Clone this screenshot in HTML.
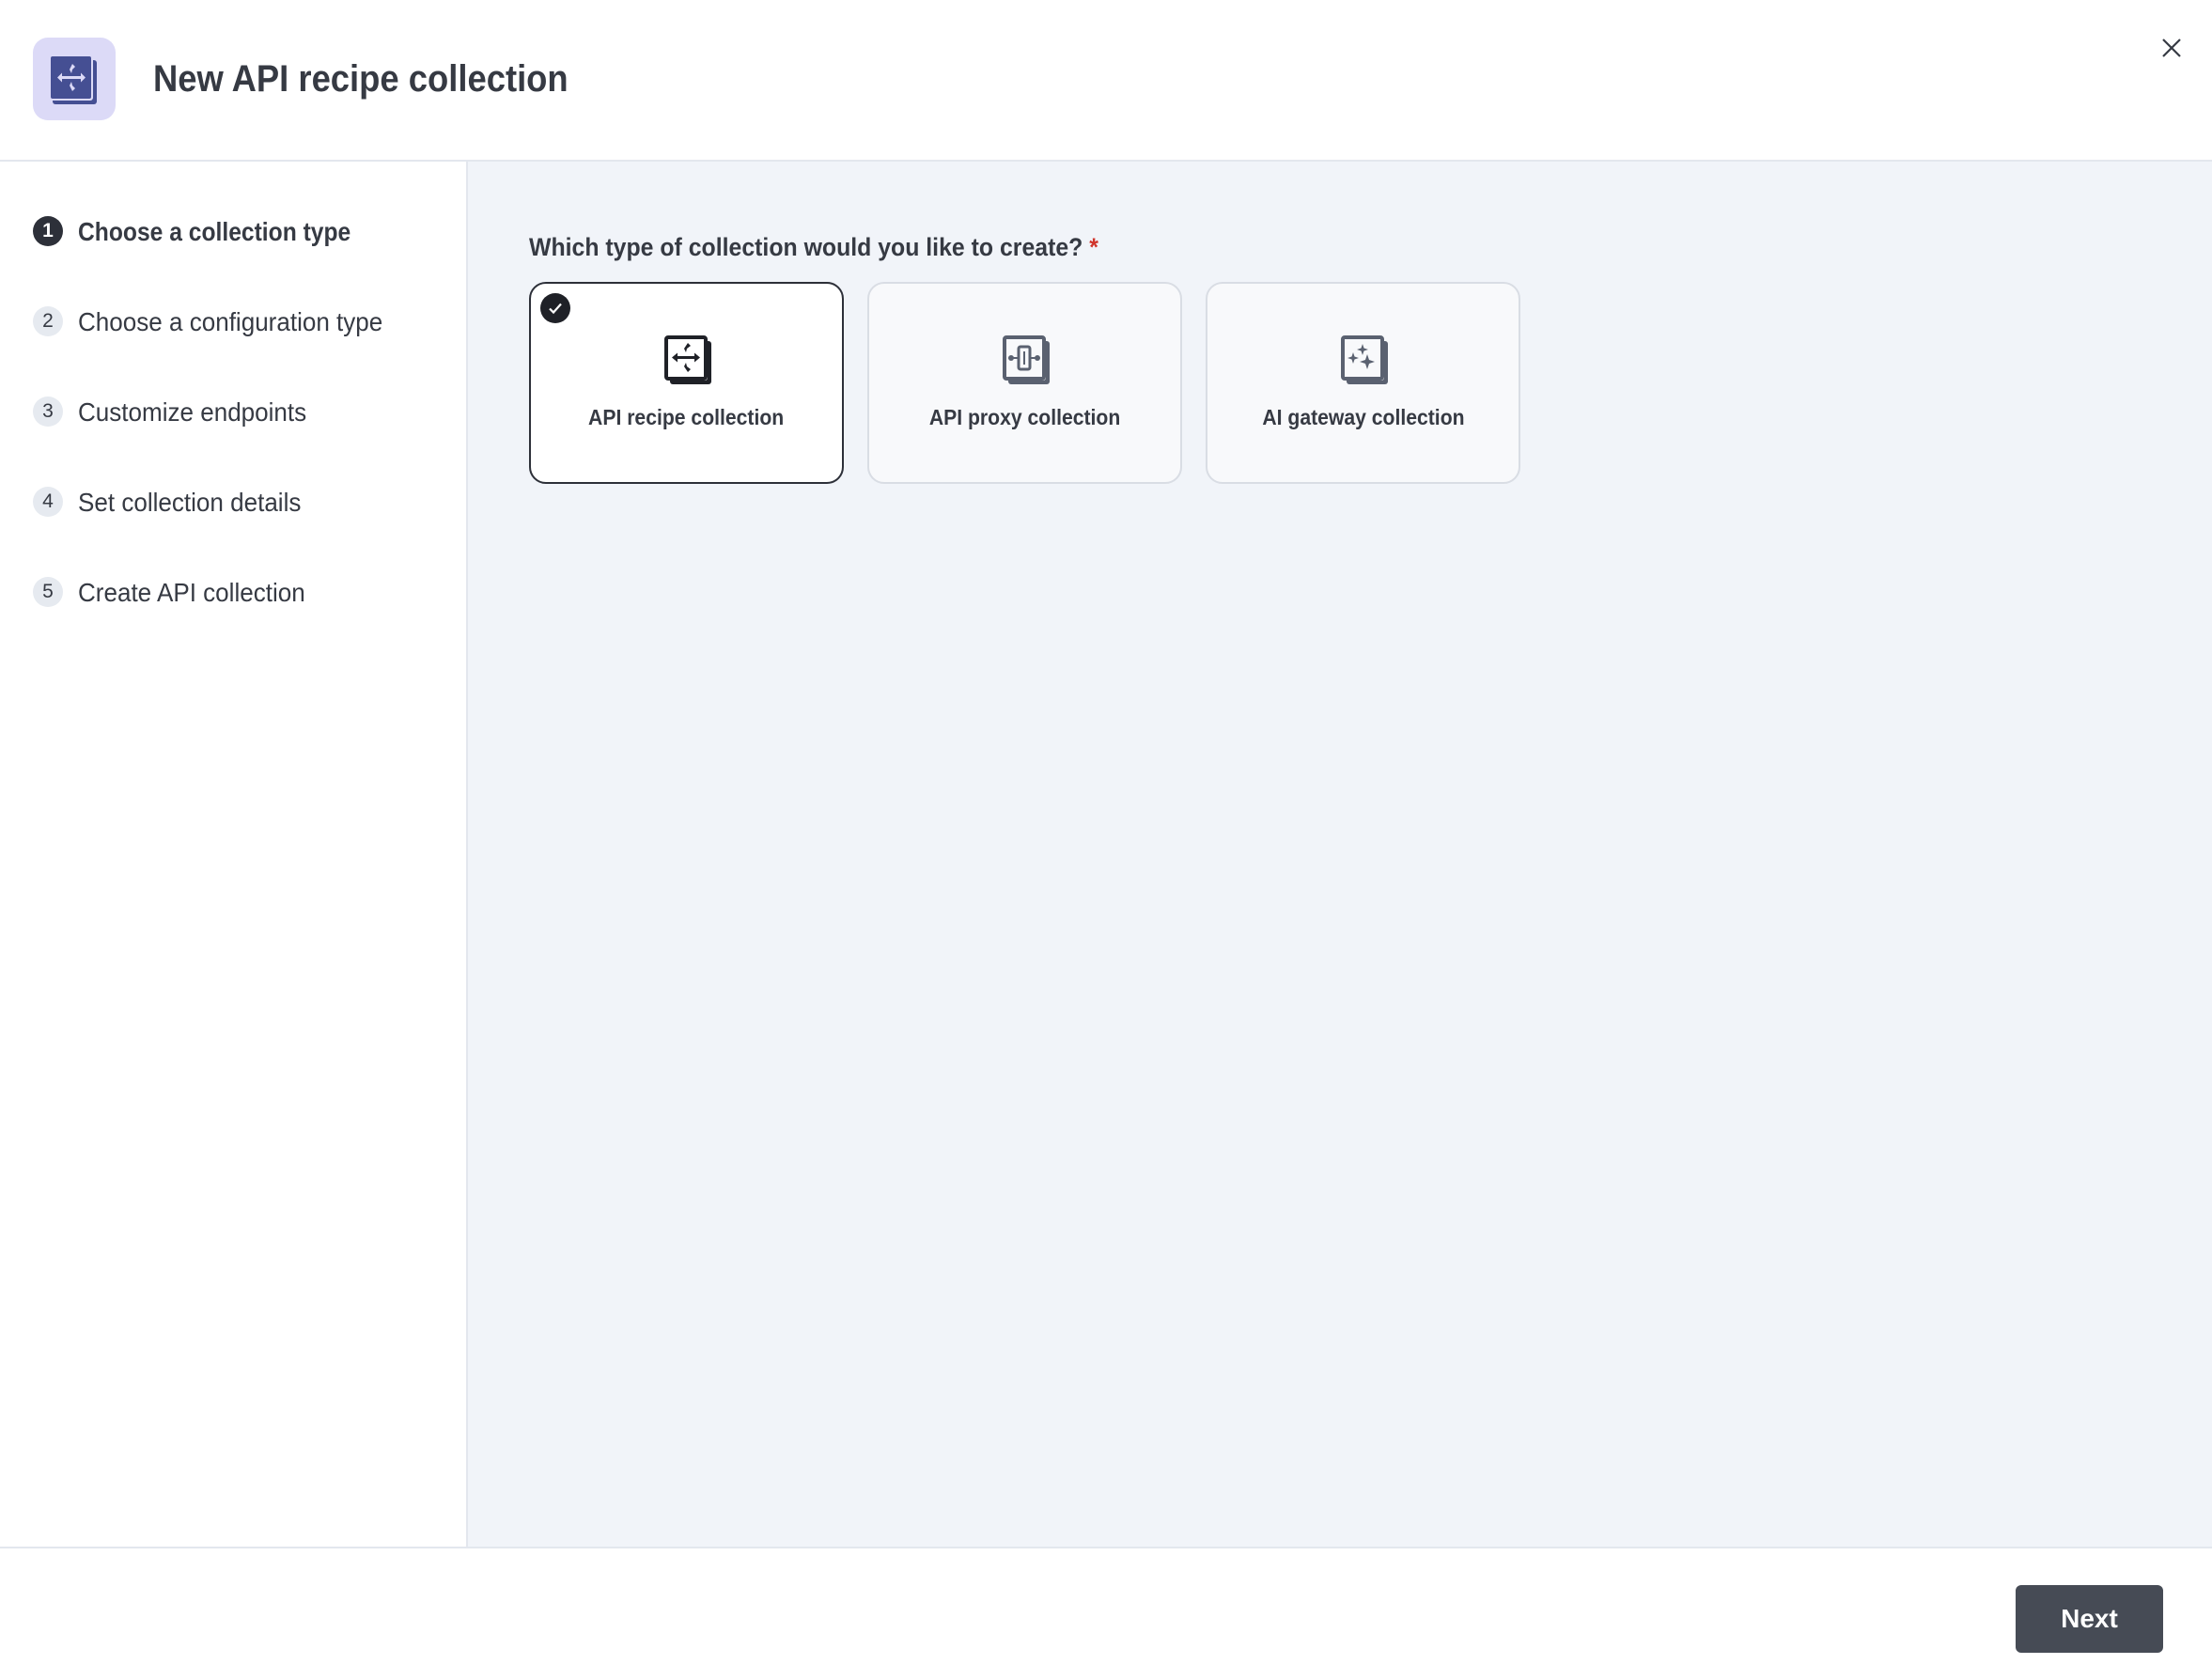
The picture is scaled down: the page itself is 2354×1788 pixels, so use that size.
<!DOCTYPE html>
<html><head><meta charset="utf-8"><style>
*{margin:0;padding:0;box-sizing:border-box}
body{width:2354px;height:1788px;position:relative;background:#fff;font-family:"Liberation Sans",sans-serif;color:#363a43;overflow:hidden}
.t{position:absolute;white-space:nowrap;transform-origin:0 50%;line-height:1}
#hdr{position:absolute;left:0;top:0;width:2354px;height:172px;border-bottom:2px solid #e3e7ee;background:#fff}
#side{position:absolute;left:0;top:172px;width:498px;height:1474px;border-right:2px solid #e3e7ee;background:#fff}
#main{position:absolute;left:498px;top:172px;width:1856px;height:1474px;background:#f1f4f9}
#foot{position:absolute;left:0;top:1646px;width:2354px;height:142px;border-top:2px solid #e3e7ee;background:#fff}
.circ{position:absolute;left:35px;width:32px;height:32px;border-radius:50%;background:#e6eaf0;color:#363a43;font-size:21px;text-align:center;line-height:32px}
.st{left:83px;font-size:28px;transform:scaleX(0.93)}
.card{position:absolute;top:300px;width:335px;height:215px;border-radius:18px;border:2px solid #d9dde4;background:#f8f9fb}
.card .lbl{position:absolute;left:0;right:0;top:129px;text-align:center;font-size:23px;font-weight:bold;color:#363a43}
.card .lbl span{display:inline-block;transform:scaleX(0.92)}
.card svg.ic{position:absolute;left:140px;top:53px}
</style></head><body>
<div id="hdr">
 <div style="position:absolute;left:35px;top:40px;width:88px;height:88px;border-radius:16px;background:#dcdaf7">
  <svg width="88" height="88" viewBox="0 0 88 88"><rect x="21" y="24" width="47" height="47" rx="3" fill="#454f93"/><rect x="17" y="20" width="47" height="47" rx="3" fill="#dcdaf7"/><rect x="19" y="20" width="43" height="45" rx="2" fill="#454f93"/>
  <g fill="#dcdaf7"><rect x="28" y="41" width="26" height="3"/><path d="M26 42.5l5-5v10z M56 42.5l-5-5v10z"/><path d="M41 38l-2-4 3-6 3 3-3 3z M41 47l-2 4 3 6 3-3-3-3z"/></g></svg>
 </div>
 <div class="t" style="left:163px;top:64px;font-size:40px;font-weight:bold;transform:scaleX(0.91)">New API recipe collection</div>
 <svg style="position:absolute;left:2300px;top:40px" width="22" height="22" viewBox="0 0 22 22"><path d="M2 2L20 20M20 2L2 20" stroke="#363a43" stroke-width="2.2"/></svg>
</div>
<div id="side">
 <div class="circ" style="top:58px;background:#2d3039;color:#fff;font-weight:bold">1</div>
 <div class="t st" style="top:61px;font-weight:bold;transform:scaleX(0.88)">Choose a collection type</div>
 <div class="circ" style="top:154px">2</div>
 <div class="t st" style="top:157px">Choose a configuration type</div>
 <div class="circ" style="top:250px">3</div>
 <div class="t st" style="top:253px">Customize endpoints</div>
 <div class="circ" style="top:346px">4</div>
 <div class="t st" style="top:349px">Set collection details</div>
 <div class="circ" style="top:442px">5</div>
 <div class="t st" style="top:445px">Create API collection</div>
</div>
<div id="main">
 <div class="t" style="left:65px;top:78px;font-size:27px;font-weight:bold;transform:scaleX(0.92)">Which type of collection would you like to create?<span style="color:#d0342c"> *</span></div>
</div>
<div class="card" style="left:563px;background:#fff;border-color:#2d3039">
 <div style="position:absolute;left:10px;top:10px;width:32px;height:32px;border-radius:50%;background:#1f2127"><svg width="32" height="32"><path d="M10 16.5l4 4 8-9" stroke="#fff" stroke-width="2.2" fill="none"/></svg></div>
 <svg class="ic" width="56" height="56" viewBox="0 0 56 56"><rect x="8" y="8" width="44" height="46" rx="3" fill="#1f2127"/><rect x="2" y="2" width="46" height="48" rx="3" fill="#fff"/><rect x="4" y="4" width="42" height="44" rx="2" fill="none" stroke="#1f2127" stroke-width="4"/><g fill="#1f2127"><rect x="13" y="24" width="24" height="3"/><path d="M10 25.5l6-5v10z M40 25.5l-6-5v10z"/><path d="M25 20l-2-4 4-6 3 3-4 3z M25 31l-2 4 4 6 3-3-4-3z"/></g></svg>
 <div class="lbl"><span>API recipe collection</span></div>
</div>
<div class="card" style="left:923px">
 <svg class="ic" width="56" height="56" viewBox="0 0 56 56"><rect x="8" y="8" width="44" height="46" rx="3" fill="#5a6170"/><rect x="2" y="2" width="46" height="48" rx="3" fill="#f8f9fb"/><rect x="4" y="4" width="42" height="44" rx="2" fill="none" stroke="#5a6170" stroke-width="4"/><rect x="19" y="14" width="12" height="24" rx="2" fill="none" stroke="#5a6170" stroke-width="3"/><rect x="24" y="19" width="2" height="14" fill="#5a6170"/><circle cx="11" cy="26" r="3" fill="#5a6170"/><circle cx="39" cy="26" r="3" fill="#5a6170"/><rect x="11" y="25" width="8" height="2" fill="#5a6170"/><rect x="31" y="25" width="8" height="2" fill="#5a6170"/></svg>
 <div class="lbl"><span>API proxy collection</span></div>
</div>
<div class="card" style="left:1283px">
 <svg class="ic" width="56" height="56" viewBox="0 0 56 56"><rect x="8" y="8" width="44" height="46" rx="3" fill="#5a6170"/><rect x="2" y="2" width="46" height="48" rx="3" fill="#f8f9fb"/><rect x="4" y="4" width="42" height="44" rx="2" fill="none" stroke="#5a6170" stroke-width="4"/><g fill="#5a6170"><path d="M25 11l1.5 4.5 4.5 1.5-4.5 1.5-1.5 4.5-1.5-4.5-4.5-1.5 4.5-1.5z"/><path d="M15 20l1.5 4.5 4.5 1.5-4.5 1.5-1.5 4.5-1.5-4.5-4.5-1.5 4.5-1.5z"/><path d="M30 22l2 6 6 2-6 2-2 6-2-6-6-2 6-2z"/></g></svg>
 <div class="lbl"><span>AI gateway collection</span></div>
</div>
<div id="foot">
 <div style="position:absolute;left:2145px;top:39px;width:157px;height:72px;border-radius:6px;background:#464b55;color:#fff;font-size:28px;font-weight:bold;text-align:center;line-height:72px">Next</div>
</div>
</body></html>
